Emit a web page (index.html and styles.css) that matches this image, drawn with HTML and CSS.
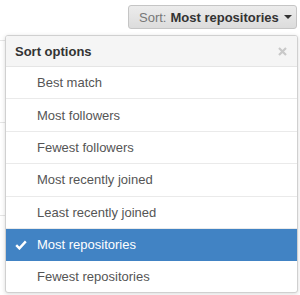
FILE: index.html
```html
<!DOCTYPE html>
<html lang="en">
<head>
<meta charset="UTF-8">
<title>Sort options</title>
<link rel="stylesheet" href="styles.css">
</head>
<body>
    <div class="page-lines">
        <div class="line line-1"></div>
        <div class="line line-2"></div>
        <div class="line line-3"></div>
    </div>
    <div class="toolbar">
        <button class="sort-button">
            <span class="sort-label">Sort:</span>
            <strong>Most repositories</strong>
            <span class="caret"></span>
        </button>
    </div>
    <div class="sort-menu">
        <div class="menu-header">
            <span class="menu-title">Sort options</span>
            <span class="menu-close">
                <svg width="9" height="9" viewBox="0 0 9 9"><path d="M1 1L8 8M8 1L1 8" stroke="#c9c9c9" stroke-width="2.2"/></svg>
            </span>
        </div>
        <ul class="menu-list">
            <li class="menu-item">Best match</li>
            <li class="menu-item">Most followers</li>
            <li class="menu-item">Fewest followers</li>
            <li class="menu-item">Most recently joined</li>
            <li class="menu-item">Least recently joined</li>
            <li class="menu-item selected">
                <svg class="check" width="12" height="10" viewBox="0 0 12 10"><path d="M1.2 5.2L4.4 8.4L10.8 1.4" fill="none" stroke="#fff" stroke-width="2.4"/></svg>
                Most repositories
            </li>
            <li class="menu-item last">Fewest repositories</li>
        </ul>
    </div>
</body>
</html>
```

FILE: styles.css
```css
body, html {
    margin: 0;
    padding: 0;
    background-color: #fff;
}
body {
    position: relative;
    width: 300px;
    height: 295px;
    overflow: hidden;
    font-family: "Liberation Sans", Arial, sans-serif;
    font-size: 13px;
    color: #333;
}
/* faint page content behind the menu */
.page-lines .line {
    position: absolute;
    left: 0;
    width: 6px;
    height: 1px;
    background: #e5e5e5;
}
.line-1 { top: 40px; }
.line-2 { top: 122px; }
.line-3 { top: 215px; }

.toolbar {
    display: flex;
    justify-content: flex-end;
    padding: 5px 3px 0 0;
    height: 24px;
}
.sort-button {
    display: flex;
    align-items: center;
    height: 24px;
    width: 169px;
    padding: 0 0 0 10px;
    box-sizing: border-box;
    border: 1px solid #c5c5c5;
    border-radius: 3px;
    background: linear-gradient(#ececec, #dcdcdc);
    font-family: "Liberation Sans", Arial, sans-serif;
    font-size: 13px;
    color: #333;
    white-space: nowrap;
}
.sort-label {
    color: #777;
    margin-right: 4px;
}
.caret {
    display: inline-block;
    margin-left: 5px;
    border-left: 4px solid transparent;
    border-right: 4px solid transparent;
    border-top: 4px solid #333;
}
.sort-menu {
    position: relative;
    margin: 6px 0 0 5px;
    width: 291px;
    border: 1px solid #d0d0d0;
    border-radius: 3px;
    box-shadow: 0 1px 4px rgba(0, 0, 0, 0.15);
    background: #fff;
    overflow: hidden;
}
.menu-header {
    display: flex;
    justify-content: space-between;
    align-items: center;
    height: 30px;
    padding: 0 10px 0 9px;
    background: #f5f5f5;
    border-bottom: 1px solid #e5e5e5;
}
.menu-title {
    font-weight: bold;
}
.menu-close {
    display: flex;
}
.menu-list {
    list-style-type: none;
    margin: 0;
    padding: 0;
}
.menu-item {
    display: flex;
    align-items: center;
    height: 31.4px;
    padding-left: 31px;
    border-bottom: 1px solid #eaeaea;
    color: #555;
}
.menu-item.last {
    border-bottom: none;
    height: 31px;
}
.menu-item.selected {
    position: relative;
    background: #4183c4;
    color: #fff;
    border-bottom-color: #4183c4;
}
.check {
    position: absolute;
    left: 9px;
    top: 11px;
}
```
